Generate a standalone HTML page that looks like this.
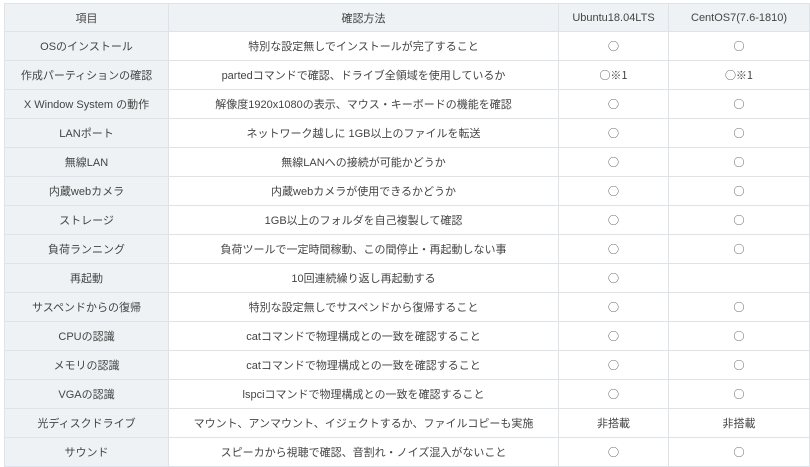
<!DOCTYPE html>
<html><head><meta charset="utf-8"><style>
body{margin:0;background:#fff;width:810px;height:450px;overflow:hidden;font-family:"Liberation Sans","Noto Sans CJK JP",sans-serif;}
table{position:absolute;left:4px;top:3px;border-collapse:collapse;table-layout:fixed;width:805px;}
td{border:1px solid #dde3e8;height:28px;padding:0;text-align:center;font-size:11px;color:#444;white-space:nowrap;overflow:hidden;}
tr.h td{background:#eef2f5;height:27px;}
td:first-child{background:#eef2f5;}
.o{font-family:"Noto Sans CJK JP",sans-serif;font-size:11px;}
</style></head><body>
<table>
<colgroup><col style="width:164px"><col style="width:390px"><col style="width:110px"><col style="width:141px"></colgroup>
<tr class="h"><td>項目</td><td>確認方法</td><td>Ubuntu18.04LTS</td><td>CentOS7(7.6-1810)</td></tr>
<tr><td>OSのインストール</td><td>特別な設定無しでインストールが完了すること</td><td class="o">○</td><td class="o">○</td></tr>
<tr><td>作成パーティションの確認</td><td>partedコマンドで確認、ドライブ全領域を使用しているか</td><td class="o">○※1</td><td class="o">○※1</td></tr>
<tr><td>X Window System の動作</td><td>解像度1920x1080の表示、マウス・キーボードの機能を確認</td><td class="o">○</td><td class="o">○</td></tr>
<tr><td>LANポート</td><td>ネットワーク越しに 1GB以上のファイルを転送</td><td class="o">○</td><td class="o">○</td></tr>
<tr><td>無線LAN</td><td>無線LANへの接続が可能かどうか</td><td class="o">○</td><td class="o">○</td></tr>
<tr><td>内蔵webカメラ</td><td>内蔵webカメラが使用できるかどうか</td><td class="o">○</td><td class="o">○</td></tr>
<tr><td>ストレージ</td><td>1GB以上のフォルダを自己複製して確認</td><td class="o">○</td><td class="o">○</td></tr>
<tr><td>負荷ランニング</td><td>負荷ツールで一定時間稼動、この間停止・再起動しない事</td><td class="o">○</td><td class="o">○</td></tr>
<tr><td>再起動</td><td>10回連続繰り返し再起動する</td><td class="o">○</td><td></td></tr>
<tr><td>サスペンドからの復帰</td><td>特別な設定無しでサスペンドから復帰すること</td><td class="o">○</td><td class="o">○</td></tr>
<tr><td>CPUの認識</td><td>catコマンドで物理構成との一致を確認すること</td><td class="o">○</td><td class="o">○</td></tr>
<tr><td>メモリの認識</td><td>catコマンドで物理構成との一致を確認すること</td><td class="o">○</td><td class="o">○</td></tr>
<tr><td>VGAの認識</td><td>lspciコマンドで物理構成との一致を確認すること</td><td class="o">○</td><td class="o">○</td></tr>
<tr><td>光ディスクドライブ</td><td>マウント、アンマウント、イジェクトするか、ファイルコピーも実施</td><td>非搭載</td><td>非搭載</td></tr>
<tr><td>サウンド</td><td>スピーカから視聴で確認、音割れ・ノイズ混入がないこと</td><td class="o">○</td><td class="o">○</td></tr>
</table>
</body></html>
